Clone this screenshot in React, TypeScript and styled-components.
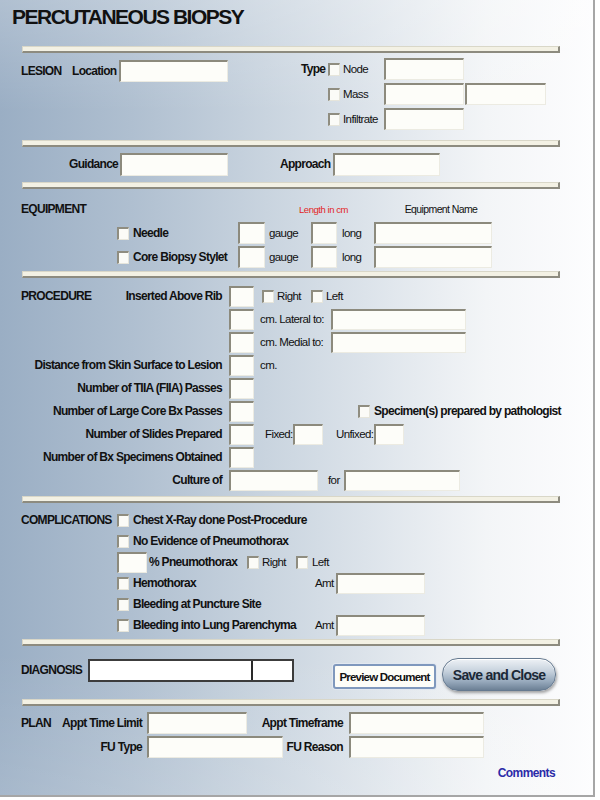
import React from 'react'
import styled, { createGlobalStyle } from 'styled-components'

const GlobalStyle = createGlobalStyle`
  html, body {
    margin: 0;
    padding: 0;
    background: #ffffff;
  }
  body {
    font-family: 'Liberation Sans', Arial, sans-serif;
    color: #111;
  }
`

const Page = styled.div`
  width: 595px;
  height: 797px;
  box-sizing: border-box;
  padding: 4px 0 0 21px;
  border-right: 2px solid #a6a6a6;
  border-bottom: 2px solid #a6a6a6;
  background:
    linear-gradient(180deg, rgba(255, 255, 255, 0.22) 0%, rgba(255, 255, 255, 0) 14%, rgba(255, 255, 255, 0) 82%, rgba(255, 255, 255, 0.12) 100%),
    linear-gradient(90deg, #9aaec4 0%, #afbfd0 22%, #c9d4df 45%, #e1e7ed 66%, #f3f5f7 82%, #fdfdfe 100%);
`

const Title = styled.h1`
  margin: 0 0 16px -9px;
  font-size: 21px;
  letter-spacing: -1.5px;
  line-height: 26px;
  font-weight: bold;
`

// raised separator between the form blocks
const Bar = styled.div`
  width: 538px;
  height: 7px;
  margin-left: 1px;
  box-sizing: border-box;
  background: #f3f1e4;
  border-top: 1px solid #d9d7c8;
  border-left: 1px solid #d9d7c8;
  border-bottom: 2px solid #8d8b7f;
  border-right: 2px solid #8d8b7f;
`

const Label = styled.span<{ $w?: number; $ml?: number; $right?: boolean; $plain?: boolean; $center?: boolean }>`
  flex: none;
  display: inline-block;
  ${(p) => (p.$w ? `width: ${p.$w}px;` : '')}
  margin-left: ${(p) => p.$ml ?? 0}px;
  text-align: ${(p) => (p.$right ? 'right' : p.$center ? 'center' : 'left')};
  font-size: ${(p) => (p.$plain ? 11.5 : 12)}px;
  letter-spacing: ${(p) => (p.$plain ? -0.6 : -0.7)}px;
  font-weight: ${(p) => (p.$plain ? 'normal' : 'bold')};
  line-height: 15px;
  white-space: nowrap;
`

const RedNote = styled(Label)`
  color: #e3241f;
  font-size: 9.5px;
  letter-spacing: -0.45px;
`

const SmallHead = styled(Label)`
  font-size: 10.5px;
  letter-spacing: -0.6px;
`

const Field = styled.input.attrs({ type: 'text' })<{ $w: number; $h?: number; $ml?: number }>`
  flex: none;
  box-sizing: border-box;
  width: ${(p) => p.$w}px;
  height: ${(p) => p.$h ?? 22}px;
  margin: 0 0 0 ${(p) => p.$ml ?? 0}px;
  padding: 0 3px;
  background: #fdfdf9;
  border-style: solid;
  border-width: 2px 1px 1px 2px;
  border-color: #8c8a7d #ecebe2 #ecebe2 #8c8a7d;
  font: inherit;
  font-size: 11px;
  outline: none;
`

const Check = styled.input.attrs({ type: 'checkbox' })<{ $ml?: number }>`
  appearance: none;
  flex: none;
  box-sizing: border-box;
  width: 12px;
  height: 13px;
  margin: 0 0 0 ${(p) => p.$ml ?? 0}px;
  background: #fbfbf7;
  border-style: solid;
  border-width: 2px 1px 1px 2px;
  border-color: #8f8d80 #e6e5db #e6e5db #8f8d80;
`

const Line = styled.div<{ $h?: number }>`
  display: flex;
  align-items: center;
  height: ${(p) => p.$h ?? 22}px;
`

const Block = styled.section<{ $pt: number; $pb: number; $gap?: number }>`
  display: flex;
  flex-direction: column;
  gap: ${(p) => p.$gap ?? 0}px;
  padding: ${(p) => p.$pt}px 0 ${(p) => p.$pb}px;
`

const LesionBlock = styled.section`
  display: flex;
  align-items: flex-start;
  padding: 5px 0 10px;
`

const LocationGroup = styled(Line)`
  margin-top: 2px;
`

const TypeRows = styled.div`
  display: flex;
  flex-direction: column;
  gap: 3px;
  margin-left: 73px;
`

// left label cell holding a block title and a right-aligned field name
const HeadCell = styled.span<{ $w: number; $mr: number }>`
  flex: none;
  display: flex;
  justify-content: space-between;
  width: ${(p) => p.$w}px;
  margin-right: ${(p) => p.$mr}px;
  font-size: 12px;
  letter-spacing: -0.7px;
  font-weight: bold;
  line-height: 15px;
  white-space: nowrap;
`

const ProcExtra = styled.div`
  display: flex;
  align-items: center;
  margin-left: 6px;
`

const DiagRow = styled.div`
  display: flex;
  align-items: flex-start;
  height: 33px;
`

const DiagTitle = styled(Label)`
  margin-top: 5px;
`

const DiagBox = styled.div`
  flex: none;
  display: flex;
  box-sizing: border-box;
  width: 206px;
  height: 23px;
  margin-top: 1px;
  background: #ffffff;
  border: 2px solid #3c3c3c;
`

const DiagPart = styled.input.attrs({ type: 'text' })<{ $w?: number }>`
  box-sizing: border-box;
  ${(p) => (p.$w ? `flex: none; width: ${p.$w}px;` : 'flex: 1; min-width: 0;')}
  height: 100%;
  margin: 0;
  padding: 0 3px;
  border: 0;
  border-right: ${(p) => (p.$w ? '2px solid #2a2a2a' : '0')};
  background: transparent;
  outline: none;
`

const PreviewButton = styled.button`
  flex: none;
  box-sizing: border-box;
  width: 103px;
  height: 25px;
  margin: 6px 0 0 39px;
  padding: 0;
  background: #fdfdf8;
  border: 2px solid #7f98bd;
  border-radius: 3px;
  box-shadow: 0 0 0 1px #e2e8f0;
  font-family: inherit;
  font-size: 11.5px;
  letter-spacing: -0.8px;
  font-weight: bold;
  color: #111;
`

const SaveButton = styled.button`
  flex: none;
  box-sizing: border-box;
  width: 114px;
  height: 33px;
  margin-left: 6px;
  padding: 0;
  border: 1px solid #667a90;
  border-radius: 16px;
  background: linear-gradient(180deg, #eef2f6 0%, #c8d3de 38%, #98aabd 72%, #6c8095 100%);
  box-shadow: 1px 2px 3px rgba(0, 0, 0, 0.35), inset 0 1px 0 #ffffff;
  font-family: inherit;
  font-size: 14px;
  letter-spacing: -0.8px;
  font-weight: bold;
  color: #1b2837;
`

const CommentsLink = styled.a`
  display: block;
  width: 534px;
  margin-top: 6px;
  text-align: right;
  font-size: 12px;
  letter-spacing: -0.6px;
  font-weight: bold;
  line-height: 15px;
  color: #2b2ba8;
  text-decoration: none;
`

const procRows: { title?: string; label: string; extra?: React.ReactNode }[] = [
  {
    title: 'PROCEDURE',
    label: 'Inserted Above Rib',
    extra: (
      <>
        <Check $ml={2} />
        <Label $plain $ml={3} $w={34}>
          Right
        </Label>
        <Check />
        <Label $plain $ml={3}>
          Left
        </Label>
      </>
    ),
  },
  {
    label: '',
    extra: (
      <>
        <Label $plain $w={71}>
          cm. Lateral to:
        </Label>
        <Field $w={135} $h={21} />
      </>
    ),
  },
  {
    label: '',
    extra: (
      <>
        <Label $plain $w={71}>
          cm. Medial to:
        </Label>
        <Field $w={135} $h={21} />
      </>
    ),
  },
  {
    label: 'Distance from Skin Surface to Lesion',
    extra: <Label $plain>cm.</Label>,
  },
  { label: 'Number of TIIA (FIIA) Passes' },
  {
    label: 'Number of Large Core Bx Passes',
    extra: (
      <>
        <Check $ml={98} />
        <Label $ml={4}>Specimen(s) prepared by pathologist</Label>
      </>
    ),
  },
  {
    label: 'Number of Slides Prepared',
    extra: (
      <>
        <Label $plain $ml={5} $w={28}>
          Fixed:
        </Label>
        <Field $w={30} $h={21} />
        <Label $plain $ml={13} $w={38}>
          Unfixed:
        </Label>
        <Field $w={30} $h={21} />
      </>
    ),
  },
  { label: 'Number of Bx Specimens Obtained' },
]

const App = () => {
  return (
    <Page>
      <GlobalStyle />
      <Title>PERCUTANEOUS BIOPSY</Title>
      <Bar />

      <LesionBlock>
        <LocationGroup>
          <Label $w={51}>LESION</Label>
          <Label $w={47}>Location</Label>
          <Field $w={109} />
        </LocationGroup>
        <TypeRows>
          <Line>
            <Label $w={27}>Type</Label>
            <Check />
            <Label $plain $ml={3} $w={41}>
              Node
            </Label>
            <Field $w={80} />
          </Line>
          <Line>
            <Check $ml={27} />
            <Label $plain $ml={3} $w={41}>
              Mass
            </Label>
            <Field $w={80} />
            <Field $w={81} $ml={1} />
          </Line>
          <Line>
            <Check $ml={27} />
            <Label $plain $ml={3} $w={41}>
              Infiltrate
            </Label>
            <Field $w={80} />
          </Line>
        </TypeRows>
      </LesionBlock>
      <Bar />

      <Block $pt={6} $pb={6}>
        <Line $h={23}>
          <Label $ml={48} $w={51}>
            Guidance
          </Label>
          <Field $w={108} $h={23} />
          <Label $ml={52} $w={53}>
            Approach
          </Label>
          <Field $w={107} $h={23} />
        </Line>
      </Block>
      <Bar />

      <Block $pt={10} $pb={3} $gap={2}>
        <Line $h={21}>
          <Label $w={96}>EQUIPMENT</Label>
          <RedNote $plain $ml={157} $w={99} $center>
            Length in cm
          </RedNote>
          <SmallHead $plain $ml={1} $w={134} $center>
            Equipment Name
          </SmallHead>
        </Line>
        {['Needle', 'Core Biopsy Stylet'].map((name) => (
          <Line key={name}>
            <Check $ml={96} />
            <Label $ml={4} $w={105}>
              {name}
            </Label>
            <Field $w={27} />
            <Label $plain $ml={4} $w={42}>
              gauge
            </Label>
            <Field $w={26} />
            <Label $plain $ml={5} $w={32}>
              long
            </Label>
            <Field $w={118} />
          </Line>
        ))}
      </Block>
      <Bar />

      <Block $pt={8} $pb={5} $gap={2}>
        {procRows.map((row, i) => (
          <Line $h={21} key={i}>
            <HeadCell $w={201} $mr={7}>
              <span>{row.title}</span>
              <span>{row.label}</span>
            </HeadCell>
            <Field $w={25} $h={21} />
            {row.extra && <ProcExtra>{row.extra}</ProcExtra>}
          </Line>
        ))}
        <Line $h={21}>
          <HeadCell $w={201} $mr={7}>
            <span />
            <span>Culture of</span>
          </HeadCell>
          <Field $w={89} $h={21} />
          <Label $plain $ml={10} $w={16}>
            for
          </Label>
          <Field $w={116} $h={21} />
        </Line>
      </Block>
      <Bar />

      <Block $pt={7} $pb={3}>
        <Line $h={21}>
          <Label $w={96}>COMPLICATIONS</Label>
          <Check />
          <Label $ml={4}>Chest X-Ray done Post-Procedure</Label>
        </Line>
        <Line $h={21}>
          <Check $ml={96} />
          <Label $ml={4}>No Evidence of Pneumothorax</Label>
        </Line>
        <Line $h={21}>
          <Field $w={30} $h={21} $ml={96} />
          <Label $ml={2} $w={98}>
            % Pneumothorax
          </Label>
          <Check />
          <Label $plain $ml={3} $w={34}>
            Right
          </Label>
          <Check />
          <Label $plain $ml={4}>
            Left
          </Label>
        </Line>
        <Line $h={21}>
          <Check $ml={96} />
          <Label $ml={4} $w={182}>
            Hemothorax
          </Label>
          <Label $plain $w={21}>
            Amt
          </Label>
          <Field $w={89} $h={21} />
        </Line>
        <Line $h={21}>
          <Check $ml={96} />
          <Label $ml={4}>Bleeding at Puncture Site</Label>
        </Line>
        <Line $h={21}>
          <Check $ml={96} />
          <Label $ml={4} $w={182}>
            Bleeding into Lung Parenchyma
          </Label>
          <Label $plain $w={21}>
            Amt
          </Label>
          <Field $w={89} $h={21} />
        </Line>
      </Block>
      <Bar />

      <Block $pt={12} $pb={8}>
        <DiagRow>
          <DiagTitle $w={67}>DIAGNOSIS</DiagTitle>
          <DiagBox>
            <DiagPart $w={163} />
            <DiagPart />
          </DiagBox>
          <PreviewButton>Preview Document</PreviewButton>
          <SaveButton>Save and Close</SaveButton>
        </DiagRow>
      </Block>
      <Bar />

      <Block $pt={6} $pb={0} $gap={2}>
        <Line>
          <HeadCell $w={121} $mr={5}>
            <span>PLAN</span>
            <span>Appt Time Limit</span>
          </HeadCell>
          <Field $w={100} />
          <Label $w={96} $right>
            Appt Timeframe
          </Label>
          <Field $w={135} $ml={6} />
        </Line>
        <Line>
          <Label $w={121} $right>
            FU Type
          </Label>
          <Field $w={136} $ml={5} />
          <Label $w={60} $right>
            FU Reason
          </Label>
          <Field $w={135} $ml={6} />
        </Line>
        <CommentsLink href="#">Comments</CommentsLink>
      </Block>
    </Page>
  )
}

export default App
